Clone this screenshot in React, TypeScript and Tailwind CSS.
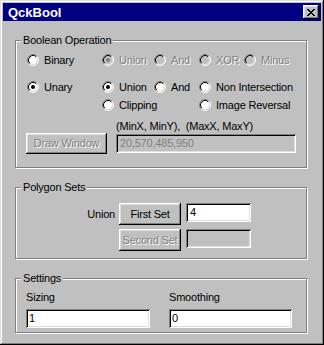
import type { ReactNode } from 'react'

const raised =
  'shadow-[inset_-1px_-1px_#000,inset_1px_1px_#fff,inset_-2px_-2px_#808080,inset_2px_2px_#dfdfdf]'
const sunken =
  'shadow-[inset_1px_1px_#808080,inset_-1px_-1px_#fff,inset_2px_2px_#000,inset_-2px_-2px_#dfdfdf]'
const grayed = 'text-[#808080] [text-shadow:1px_1px_0_#fff]'

function Radio({ checked = false, disabled = false }: { checked?: boolean; disabled?: boolean }) {
  return (
    <svg width="12" height="12" viewBox="0 0 12 12" className="shrink-0">
      <circle cx="6" cy="6" r="4.2" fill={disabled ? '#c0c0c0' : '#fff'} />
      <path d="M2.11 9.89A5.5 5.5 0 0 1 9.89 2.11" fill="none" stroke="#808080" />
      <path d="M9.89 2.11A5.5 5.5 0 0 1 2.11 9.89" fill="none" stroke="#fff" />
      <path d="M2.82 9.18A4.5 4.5 0 0 1 9.18 2.82" fill="none" stroke="#000" />
      <path d="M9.18 2.82A4.5 4.5 0 0 1 2.82 9.18" fill="none" stroke="#dfdfdf" />
      {checked && <circle cx="6" cy="6" r="2" fill={disabled ? '#808080' : '#000'} />}
    </svg>
  )
}

function Option({
  label,
  checked,
  disabled,
  className = '',
}: {
  label: string
  checked?: boolean
  disabled?: boolean
  className?: string
}) {
  return (
    <div className={`flex items-center gap-[5px] h-[16px] whitespace-nowrap ${className}`}>
      <Radio checked={checked} disabled={disabled} />
      <span className={disabled ? grayed : ''}>{label}</span>
    </div>
  )
}

function Group({ title, children }: { title: string; children: ReactNode }) {
  return (
    <fieldset className="ml-[12px] mt-[13px] w-[292px] border border-[#808080] shadow-[inset_1px_1px_#fff,1px_1px_#fff]">
      <legend className="ml-[5px] px-[2px] bg-[#c0c0c0]">{title}</legend>
      {children}
    </fieldset>
  )
}

function Button({ label, disabled, className = '' }: { label: string; disabled?: boolean; className?: string }) {
  return (
    <div className={`flex items-center justify-center bg-[#c0c0c0] whitespace-nowrap ${raised} ${className}`}>
      <span className={disabled ? grayed : ''}>{label}</span>
    </div>
  )
}

function TextBox({ value = '', disabled, className = '' }: { value?: string; disabled?: boolean; className?: string }) {
  return (
    <div
      className={`flex items-center pl-[3px] h-[19px] ${sunken} ${
        disabled ? 'bg-[#c0c0c0] text-[#808080]' : 'bg-white'
      } ${className}`}
    >
      {value}
    </div>
  )
}

export default function App() {
  return (
    <div className="w-[324px] h-[345px] bg-[#c0c0c0] p-[3px] text-[11px] leading-[13px] tracking-[-0.2px] text-black font-['Liberation_Sans',Arial,sans-serif] shadow-[inset_-1px_-1px_#000,inset_1px_1px_#dfdfdf,inset_-2px_-2px_#808080,inset_2px_2px_#fff]">
      <div className="h-[18px] bg-[#000080] flex items-center justify-between pl-[5px] pr-[2px]">
        <span className="text-white font-bold text-[13px] tracking-normal">QckBool</span>
        <div className={`w-[16px] h-[14px] bg-[#c0c0c0] flex items-center justify-center ${raised}`}>
          <svg width="8" height="7" viewBox="0 0 8 7" shapeRendering="crispEdges">
            <path
              d="M0 0h2v1H0zM6 0h2v1H6zM1 1h2v1H1zM5 1h2v1H5zM2 2h4v1H2zM3 3h2v1H3zM2 4h4v1H2zM1 5h2v1H1zM5 5h2v1H5zM0 6h2v1H0zM6 6h2v1H6z"
              fill="#000"
            />
          </svg>
        </div>
      </div>

      <Group title="Boolean Operation">
        <div className="pl-[11px] pt-[5px] pb-[13px]">
          <div className="grid grid-cols-[75px_52px_45px_45px_1fr]">
            <Option label="Binary" />
            <Option label="Union" checked disabled />
            <Option label="And" disabled />
            <Option label="XOR" disabled />
            <Option label="Minus" disabled />
          </div>
          <div className="grid grid-cols-[75px_52px_45px_45px_1fr] mt-[11px]">
            <Option label="Unary" checked />
            <Option label="Union" checked />
            <Option label="And" />
            <Option label="Non Intersection" className="col-span-2" />
          </div>
          <div className="grid grid-cols-[75px_52px_45px_45px_1fr] mt-[2px]">
            <Option label="Clipping" className="col-start-2 col-span-2" />
            <Option label="Image Reversal" className="col-start-4 col-span-2" />
          </div>
          <div className="ml-[89px] mt-[7px] whitespace-pre">(MinX, MinY),  (MaxX, MaxY)</div>
          <div className="flex items-center -ml-[1px]">
            <Button label="Draw Window" disabled className="w-[81px] h-[21px]" />
            <TextBox value="20,570,485,950" disabled className="ml-[9px] w-[180px] pl-[4px]" />
          </div>
        </div>
      </Group>

      <Group title="Polygon Sets">
        <div className="pt-[9px] pb-[7px] flex flex-col gap-[4px]">
          <div className="flex items-start">
            <div className="w-[103px] h-[22px] pr-[4px] flex items-center justify-end">Union</div>
            <Button label="First Set" className="w-[62px] h-[22px]" />
            <TextBox value="4" className="ml-[5px] w-[65px] pl-[4px]" />
          </div>
          <div className="flex items-start">
            <div className="w-[103px] h-[22px]" />
            <Button label="Second Set" disabled className="w-[62px] h-[22px]" />
            <TextBox disabled className="ml-[5px] w-[65px]" />
          </div>
        </div>
      </Group>

      <Group title="Settings">
        <div className="pl-[10px] pt-[6px] pb-[4px] flex gap-[19px]">
          <div className="flex flex-col gap-[5px]">
            <span>Sizing</span>
            <TextBox value="1" className="w-[124px]" />
          </div>
          <div className="flex flex-col gap-[5px]">
            <span>Smoothing</span>
            <TextBox value="0" className="w-[123px]" />
          </div>
        </div>
      </Group>
    </div>
  )
}
